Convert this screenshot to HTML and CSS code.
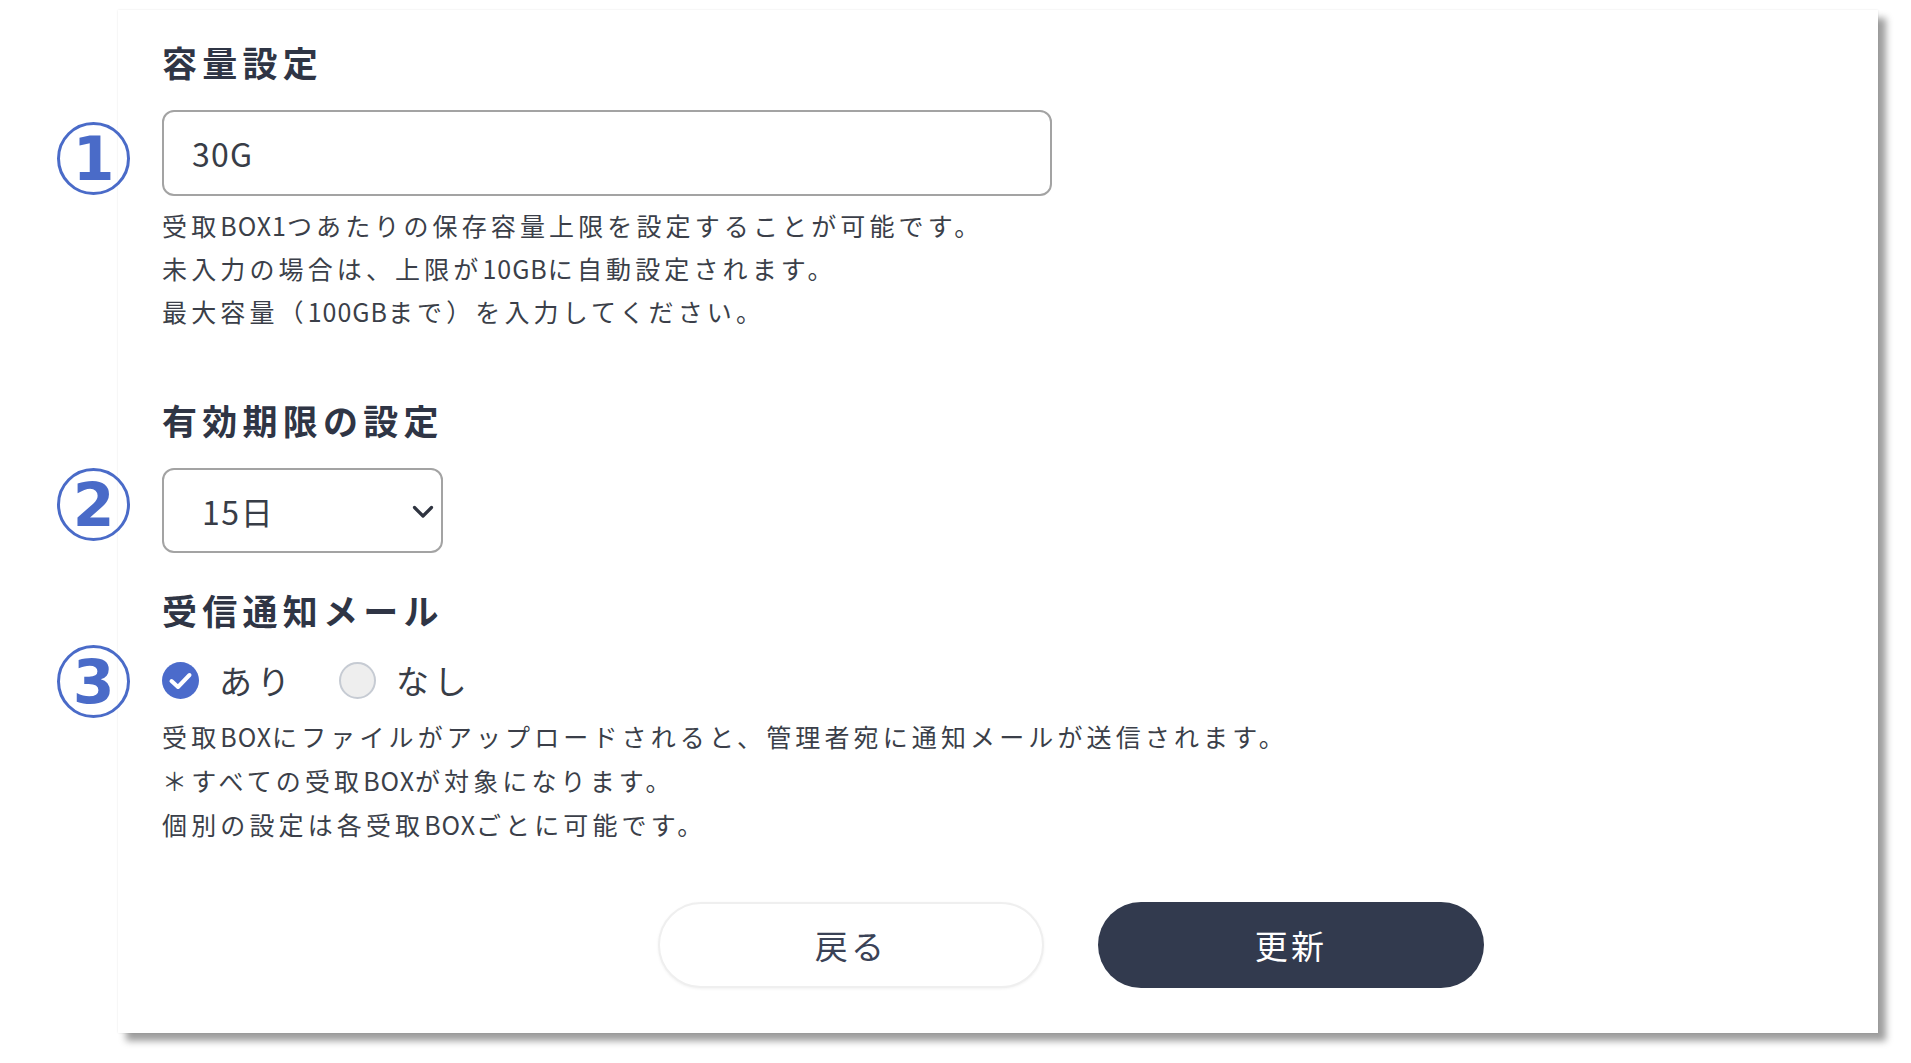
FILE: index.html
```html
<!DOCTYPE html>
<html lang="ja">
<head>
<meta charset="utf-8">
<title>設定</title>
<link rel="stylesheet" href="styles.css">
</head>
<body>
<div class="card">
  <section class="field">
    <h2 class="field-title">容量設定</h2>
    <div class="control-row control-row--input">
      <span class="anno anno--1">1</span>
      <input class="text-input" type="text" value="30G">
    </div>
    <p class="help help--first">受取<span class="en">BOX1</span>つあたりの保存容量上限を設定することが可能です。<br>未入力の場合は、上限が<span class="en">10GB</span>に自動設定されます。<br>最大容量（<span class="en">100GB</span>まで）を入力してください。</p>
  </section>

  <section class="field field--expiry">
    <h2 class="field-title">有効期限の設定</h2>
    <div class="control-row control-row--select">
      <span class="anno anno--2">2</span>
      <div class="select">
        <span class="select-value">15日</span>
        <svg class="chevron" width="22" height="14" viewBox="0 0 22 14"><path d="M2.5 2.5 L11 11 L19.5 2.5" fill="none" stroke="#2f3440" stroke-width="3.2" stroke-linecap="round" stroke-linejoin="round"/></svg>
      </div>
    </div>
  </section>

  <section class="field field--mail">
    <h2 class="field-title">受信通知メール</h2>
    <div class="control-row control-row--radio">
      <span class="anno anno--3">3</span>
      <label class="radio">
        <svg class="radio-mark" width="37" height="37" viewBox="0 0 37 37"><circle cx="18.5" cy="18.5" r="18.5" fill="#4b6bcb"/><path d="M9.5 19 L16 25 L27.5 13" fill="none" stroke="#fff" stroke-width="4" stroke-linecap="round" stroke-linejoin="round"/></svg>
        <span class="radio-label">あり</span>
      </label>
      <label class="radio">
        <span class="radio-off"></span>
        <span class="radio-label">なし</span>
      </label>
    </div>
    <p class="help help--second">受取<span class="en">BOX</span>にファイルがアップロードされると、管理者宛に通知メールが送信されます。<br>＊すべての受取<span class="en">BOX</span>が対象になります。<br>個別の設定は各受取<span class="en">BOX</span>ごとに可能です。</p>
  </section>

  <div class="actions">
    <button class="btn btn--back" type="button">戻る</button>
    <button class="btn btn--submit" type="button">更新</button>
  </div>
</div>
</body>
</html>
```

FILE: styles.css
```css
* {
  box-sizing: border-box;
}

html, body {
  margin: 0;
  padding: 0;
  background: #ffffff;
}

body {
  font-family: "Noto Sans CJK JP", "Noto Sans", sans-serif;
  color: #333a48;
  width: 1911px;
  height: 1063px;
  overflow: hidden;
}

.card {
  margin: 10px 0 0 118px;
  width: 1760px;
  height: 1023px;
  background: #ffffff;
  padding: 27px 0 0 44px;
  box-shadow: 8px 8px 7px rgba(0, 0, 0, 0.38), 0 0 2px rgba(0, 0, 0, 0.10);
}

.field-title {
  margin: 0;
  font-size: 35px;
  line-height: 50px;
  font-weight: 700;
  letter-spacing: 0.15em;
  color: #2f3545;
}

.control-row {
  position: relative;
}

.control-row--input {
  margin-top: 23px;
  width: 890px;
}

.text-input {
  display: block;
  width: 890px;
  height: 86px;
  border: 2px solid #a3a3a3;
  border-radius: 12px;
  padding: 0 0 0 28px;
  font-family: "Noto Sans CJK JP", "Noto Sans", sans-serif;
  font-size: 32px;
  letter-spacing: 0.04em;
  color: #383d47;
  background: #fff;
  outline: none;
}

.help {
  margin: 0;
  font-size: 25px;
  letter-spacing: 0.165em;
  color: #3b3f49;
}

.help .en {
  letter-spacing: 0.04em;
}

.help--first {
  margin-top: 8px;
  line-height: 43px;
}

.help--second {
  margin-top: 9px;
  line-height: 44px;
}

.field--expiry {
  margin-top: 62px;
}

.control-row--select {
  margin-top: 23px;
  width: 281px;
}

.select {
  display: flex;
  align-items: center;
  justify-content: space-between;
  width: 281px;
  height: 85px;
  border: 2px solid #a3a3a3;
  border-radius: 12px;
  padding: 0 7px 0 38px;
}

.select-value {
  font-size: 32px;
  letter-spacing: 0.05em;
  color: #383d47;
}

.chevron {
  display: block;
  margin-top: 2px;
}

.field--mail {
  margin-top: 32px;
}

.control-row--radio {
  margin-top: 20px;
  height: 50px;
  display: flex;
  align-items: center;
  gap: 44px;
}

.radio {
  display: flex;
  align-items: center;
  gap: 20px;
}

.radio-mark {
  display: block;
  flex: none;
}

.radio-off {
  display: block;
  flex: none;
  width: 37px;
  height: 37px;
  border-radius: 50%;
  background: #eeeeee;
  border: 2px solid #c6cbd3;
}

.radio-label {
  font-size: 33px;
  line-height: 50px;
  letter-spacing: 0.15em;
  color: #383d47;
}

.anno {
  position: absolute;
  left: -105px;
  width: 73px;
  height: 73px;
  border: 3px solid #4a6bc8;
  border-radius: 50%;
  display: flex;
  align-items: center;
  justify-content: center;
  font-family: "DejaVu Sans", sans-serif;
  font-weight: 700;
  font-size: 60px;
  line-height: 1;
  color: #4a6bc8;
  background: transparent;
}

.anno--1 {
  top: 12px;
}

.anno--2 {
  top: 0;
}

.anno--3 {
  top: -10px;
}

.actions {
  margin-top: 56px;
  padding-left: 496px;
  display: flex;
  gap: 54px;
}

.btn {
  width: 386px;
  height: 86px;
  border-radius: 43px;
  font-family: "Noto Sans CJK JP", "Noto Sans", sans-serif;
  font-size: 33px;
  letter-spacing: 0.1em;
  cursor: pointer;
}

.btn--back {
  background: #ffffff;
  color: #3a4256;
  border: 2px solid #efefef;
  box-shadow: 0 1px 3px rgba(0, 0, 0, 0.06);
}

.btn--submit {
  background: #323a4e;
  color: #ffffff;
  border: none;
}
```
